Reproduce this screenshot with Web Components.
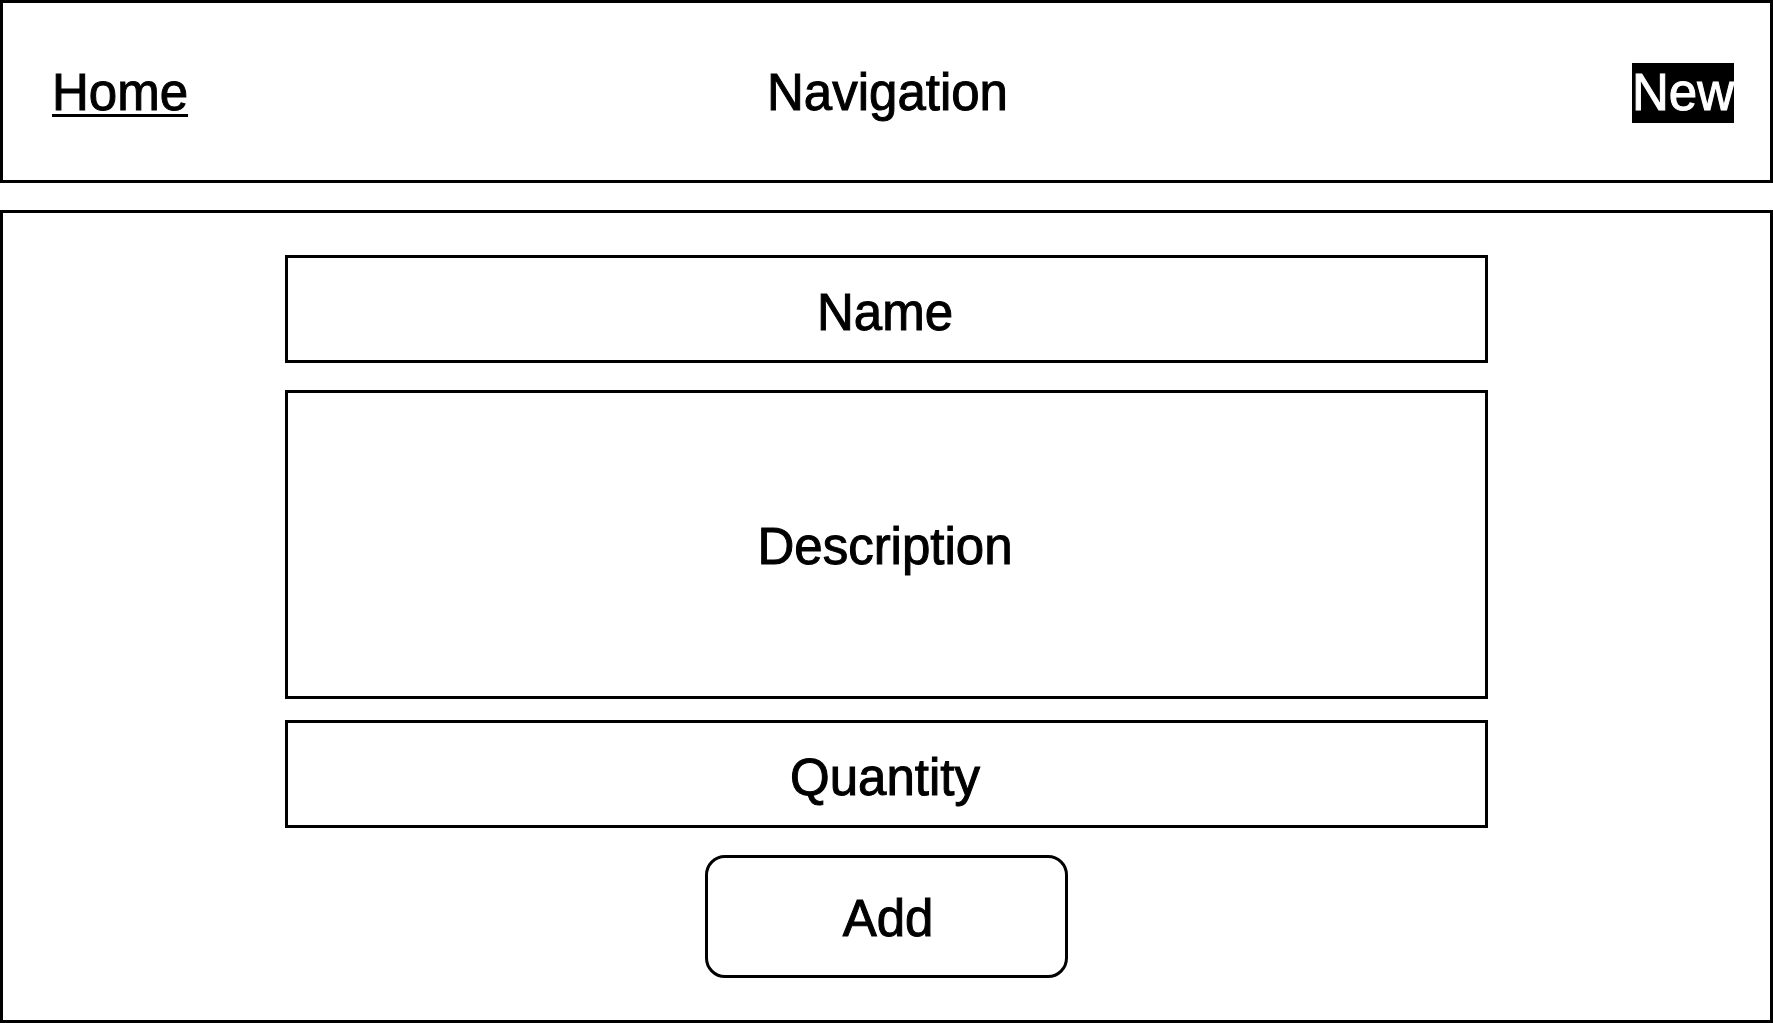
<!DOCTYPE html>
<html lang="en">
<head>
<meta charset="utf-8">
<meta name="viewport" content="width=device-width, initial-scale=1">
<title>New item</title>
<style>
  body {
    margin: 0;
    background: #fff;
    color: #000;
    font: 51px/60px "Liberation Sans", Arial, Helvetica, sans-serif;
    -webkit-text-stroke: 1px currentColor;
  }
</style>
</head>
<body>
<item-page>
  <nav-bar slot="header">
    <nav-link slot="start" href="#home">Home</nav-link>
    Navigation
    <nav-link slot="end" href="#new" current>New</nav-link>
  </nav-bar>
  <item-form>
    <text-field label="Name"></text-field>
    <text-field label="Description" multiline></text-field>
    <text-field label="Quantity"></text-field>
    <submit-button slot="action">Add</submit-button>
  </item-form>
</item-page>

<script>
  class BaseElement extends HTMLElement {
    connectedCallback() {
      if (this.shadowRoot) return;
      this.attachShadow({ mode: "open" }).innerHTML =
        `<style>*{box-sizing:border-box}:host{box-sizing:border-box}</style>${this.render()}`;
    }
  }

  customElements.define("item-page", class extends BaseElement {
    render() {
      return `
        <style>
          :host { display: flex; flex-direction: column; gap: 27px; min-height: 100vh; }
          main { flex: 1; display: flex; border: 3px solid; padding: 42px 24px; justify-content: center; }
        </style>
        <slot name="header"></slot>
        <main><slot></slot></main>`;
    }
  });

  customElements.define("nav-bar", class extends BaseElement {
    render() {
      return `
        <style>
          :host { display: block; border: 3px solid; }
          nav {
            display: grid;
            grid-template-columns: 1fr auto 1fr;
            padding: 60px 36px 57px 49px;
          }
          .end { justify-self: end; }
          .title { padding-right: 11px; }
        </style>
        <nav>
          <div><slot name="start"></slot></div>
          <div class="title"><slot></slot></div>
          <div class="end"><slot name="end"></slot></div>
        </nav>`;
    }
  });

  customElements.define("nav-link", class extends BaseElement {
    render() {
      return `
        <style>
          :host { display: block; }
          a {
            display: inline-block;
            vertical-align: top;
            color: inherit;
            text-decoration: underline 3px;
            text-underline-offset: 4px;
            text-decoration-skip-ink: none;
          }
          :host([current]) a { background: #000; color: #fff; text-decoration: none; }
        </style>
        <a href="${this.getAttribute("href")}"${this.hasAttribute("current") ? ' aria-current="page"' : ""}><slot></slot></a>`;
    }
  });

  customElements.define("item-form", class extends BaseElement {
    render() {
      return `
        <style>
          :host { display: block; width: min(100%, 1203px); }
          form { display: flex; flex-direction: column; align-items: center; gap: 27px; }
          .fields { display: flex; flex-direction: column; width: 100%; }
        </style>
        <form>
          <div class="fields"><slot></slot></div>
          <slot name="action"></slot>
        </form>`;
    }
  });

  customElements.define("text-field", class extends BaseElement {
    render() {
      const label = this.getAttribute("label");
      const attrs = `aria-label="${label}" placeholder="${label}"`;
      return `
        <style>
          :host { display: block; }
          :host(:not(:first-child)) { margin-top: 21px; }
          :host([multiline]) { margin-top: 27px; }
          input, textarea {
            display: block;
            width: 100%;
            margin: 0;
            border: 3px solid #000;
            border-radius: 0;
            padding: 24px 3px 18px 0;
            background: transparent;
            color: inherit;
            font: inherit;
            text-align: center;
            outline-offset: 3px;
          }
          input { height: 108px; }
          textarea { height: 309px; padding-top: 124px; resize: none; overflow: auto; }
          ::placeholder { color: #000; opacity: 1; }
        </style>
        ${this.hasAttribute("multiline") ? `<textarea ${attrs}></textarea>` : `<input type="text" ${attrs}>`}`;
    }
  });

  customElements.define("submit-button", class extends BaseElement {
    render() {
      return `
        <style>
          :host { display: block; width: 363px; max-width: 100%; }
          button {
            display: block;
            width: 100%;
            margin: 0;
            border: 3px solid #000;
            border-radius: 20px;
            padding: 31px 0 26px 3px;
            background: transparent;
            color: inherit;
            font: inherit;
            cursor: pointer;
          }
        </style>
        <button type="submit"><slot></slot></button>`;
    }
  });
</script>
</body>
</html>
